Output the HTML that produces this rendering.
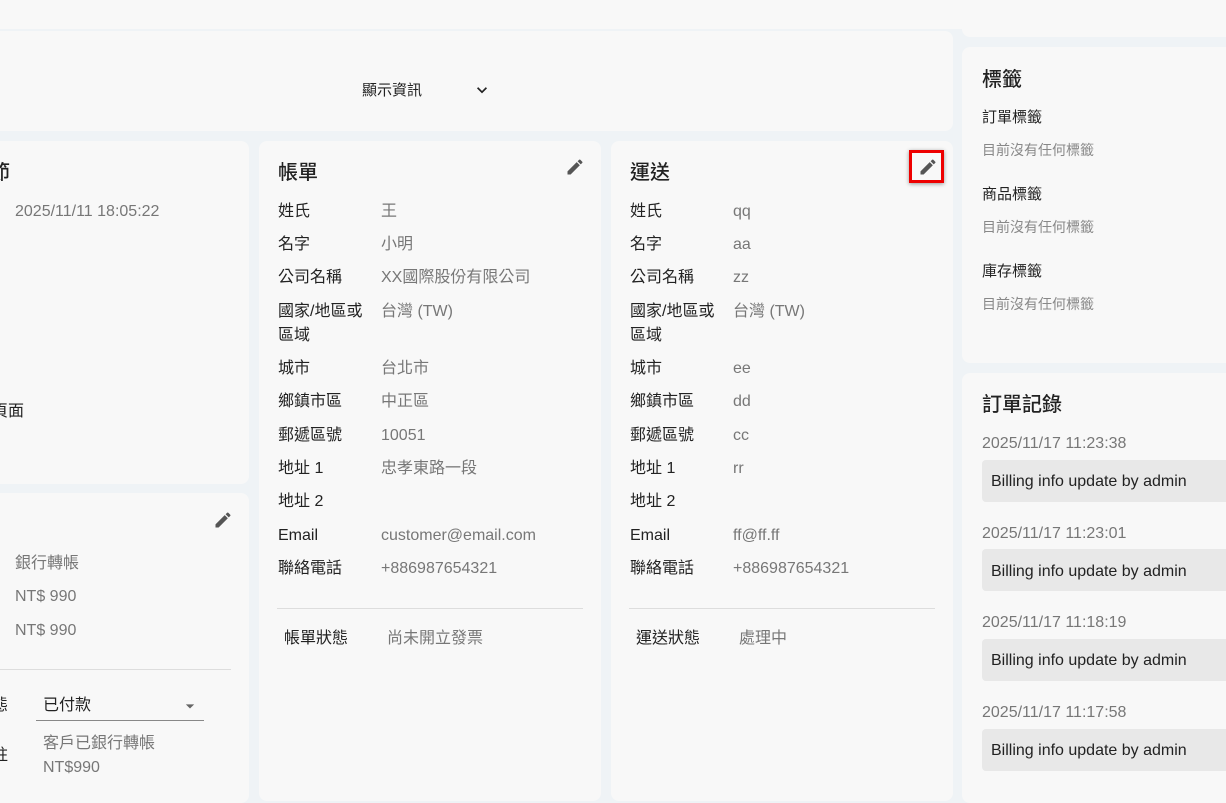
<!DOCTYPE html>
<html><head><meta charset="utf-8"><style>
*{box-sizing:border-box;margin:0;padding:0}
body{width:1226px;height:788px;overflow:hidden;background:#eff3f6;font-family:"Liberation Sans","Noto Sans CJK TC",sans-serif;color:#222;position:relative;font-size:16px}
.c{position:absolute;background:#f8f8f8;border-radius:8px}
.t{position:absolute;white-space:nowrap;line-height:22px;height:22px;transform:translateY(2px)}
.g{color:#777}
.h{font-size:20px;font-weight:500;color:#222;line-height:26px;height:26px}
.s{font-size:14px;color:#888}
.pen{position:absolute;width:20px;height:20px}
.line{position:absolute;height:1px;background:#ddd}
.bb{position:absolute;background:#e8e8e8;border-radius:4px;height:42px;left:982px;width:260px}
.two{height:48px;line-height:24px}
</style></head><body>
<div class="c" style="left:-10px;top:-10px;width:1250px;height:39px;border-radius:0 0 8px 8px"></div>
<div class="c" style="left:-10px;top:31px;width:963px;height:100px"></div>
<div class="t" style="left:362px;top:78px;font-size:15px">顯示資訊</div>
<svg class="pen" style="left:472px;top:80px" viewBox="0 0 24 24"><path d="M7.4 8.6L12 13.2l4.6-4.6L18 10l-6 6-6-6z" fill="#222"/></svg>

<div class="c" style="left:-10px;top:141px;width:259px;height:343px"></div>
<div class="t h" style="left:-10px;top:158px">節</div>
<div class="t g" style="left:15px;top:199px">2025/11/11 18:05:22</div>
<div class="t" style="left:-8px;top:399px">頁面</div>

<div class="c" style="left:-10px;top:493px;width:259px;height:310px"></div>
<svg class="pen" style="left:213px;top:510px" viewBox="0 0 24 24"><path d="M3 17.25V21h3.75L17.81 9.94l-3.75-3.75L3 17.25zM20.71 7.04a1 1 0 000-1.41l-2.34-2.34a1 1 0 00-1.41 0l-1.830 1.83 3.75 3.75 1.83-1.83z" fill="#555"/></svg>
<div class="t g" style="left:15px;top:551px">銀行轉帳</div>
<div class="t g" style="left:15px;top:584px">NT$ 990</div>
<div class="t g" style="left:15px;top:618px">NT$ 990</div>
<div class="line" style="left:0;top:669px;width:231px"></div>
<div class="t" style="left:-8px;top:693px">態</div>
<div class="t" style="left:43px;top:693px">已付款</div>
<svg class="pen" style="left:180px;top:696px" viewBox="0 0 24 24"><path d="M7 10l5 5 5-5z" fill="#666"/></svg>
<div style="position:absolute;left:36px;top:720px;width:168px;height:1px;background:#888"></div>
<div class="t" style="left:-8px;top:743px">註</div>
<div class="t g two" style="left:43px;top:730px">客戶已銀行轉帳<br>NT$990</div>

<div class="c" style="left:259px;top:141px;width:342px;height:660px"></div>
<div class="t h" style="left:278px;top:158px">帳單</div>
<svg class="pen" style="left:565px;top:157px" viewBox="0 0 24 24"><path d="M3 17.25V21h3.75L17.81 9.94l-3.75-3.75L3 17.25zM20.71 7.04a1 1 0 000-1.41l-2.34-2.34a1 1 0 00-1.41 0l-1.83 1.83 3.75 3.75 1.83-1.83z" fill="#555"/></svg>
<div class="t" style="left:278px;top:199px">姓氏</div><div class="t g" style="left:381px;top:199px">王</div>
<div class="t" style="left:278px;top:232px">名字</div><div class="t g" style="left:381px;top:232px">小明</div>
<div class="t" style="left:278px;top:265px">公司名稱</div><div class="t g" style="left:381px;top:265px">XX國際股份有限公司</div>
<div class="t two" style="left:278px;top:298px">國家/地區或<br>區域</div><div class="t g" style="left:381px;top:299px">台灣 (TW)</div>
<div class="t" style="left:278px;top:356px">城市</div><div class="t g" style="left:381px;top:356px">台北市</div>
<div class="t" style="left:278px;top:389px">鄉鎮市區</div><div class="t g" style="left:381px;top:389px">中正區</div>
<div class="t" style="left:278px;top:423px">郵遞區號</div><div class="t g" style="left:381px;top:423px">10051</div>
<div class="t" style="left:278px;top:456px">地址 1</div><div class="t g" style="left:381px;top:456px">忠孝東路一段</div>
<div class="t" style="left:278px;top:489px">地址 2</div>
<div class="t" style="left:278px;top:523px">Email</div><div class="t g" style="left:381px;top:523px">customer@email.com</div>
<div class="t" style="left:278px;top:556px">聯絡電話</div><div class="t g" style="left:381px;top:556px">+886987654321</div>
<div class="line" style="left:277px;top:608px;width:306px"></div>
<div class="t" style="left:284px;top:626px">帳單狀態</div><div class="t g" style="left:387px;top:626px">尚未開立發票</div>

<div class="c" style="left:611px;top:141px;width:342px;height:660px"></div>
<div class="t h" style="left:630px;top:158px">運送</div>
<div style="position:absolute;left:909px;top:150px;width:35px;height:33px;border:3px solid #e00;box-shadow:0 1px 4px rgba(0,0,0,.4)"></div>
<svg class="pen" style="left:918px;top:157px" viewBox="0 0 24 24"><path d="M3 17.25V21h3.75L17.81 9.94l-3.75-3.75L3 17.25zM20.71 7.04a1 1 0 000-1.41l-2.34-2.34a1 1 0 00-1.41 0l-1.83 1.83 3.75 3.75 1.83-1.83z" fill="#555"/></svg>
<div class="t" style="left:630px;top:199px">姓氏</div><div class="t g" style="left:733px;top:199px">qq</div>
<div class="t" style="left:630px;top:232px">名字</div><div class="t g" style="left:733px;top:232px">aa</div>
<div class="t" style="left:630px;top:265px">公司名稱</div><div class="t g" style="left:733px;top:265px">zz</div>
<div class="t two" style="left:630px;top:298px">國家/地區或<br>區域</div><div class="t g" style="left:733px;top:299px">台灣 (TW)</div>
<div class="t" style="left:630px;top:356px">城市</div><div class="t g" style="left:733px;top:356px">ee</div>
<div class="t" style="left:630px;top:389px">鄉鎮市區</div><div class="t g" style="left:733px;top:389px">dd</div>
<div class="t" style="left:630px;top:423px">郵遞區號</div><div class="t g" style="left:733px;top:423px">cc</div>
<div class="t" style="left:630px;top:456px">地址 1</div><div class="t g" style="left:733px;top:456px">rr</div>
<div class="t" style="left:630px;top:489px">地址 2</div>
<div class="t" style="left:630px;top:523px">Email</div><div class="t g" style="left:733px;top:523px">ff@ff.ff</div>
<div class="t" style="left:630px;top:556px">聯絡電話</div><div class="t g" style="left:733px;top:556px">+886987654321</div>
<div class="line" style="left:629px;top:608px;width:306px"></div>
<div class="t" style="left:636px;top:626px">運送狀態</div><div class="t g" style="left:739px;top:626px">處理中</div>

<div class="c" style="left:962px;top:-10px;width:280px;height:47px"></div>
<div class="c" style="left:962px;top:47px;width:280px;height:316px"></div>
<div class="t h" style="left:982px;top:65px">標籤</div>
<div class="t" style="left:982px;top:105px;font-size:15px">訂單標籤</div>
<div class="t s" style="left:982px;top:137px">目前沒有任何標籤</div>
<div class="t" style="left:982px;top:182px;font-size:15px">商品標籤</div>
<div class="t s" style="left:982px;top:214px">目前沒有任何標籤</div>
<div class="t" style="left:982px;top:259px;font-size:15px">庫存標籤</div>
<div class="t s" style="left:982px;top:291px">目前沒有任何標籤</div>

<div class="c" style="left:962px;top:373px;width:280px;height:430px"></div>
<div class="t h" style="left:982px;top:390px">訂單記錄</div>
<div class="t g" style="left:982px;top:431px">2025/11/17 11:23:38</div>
<div class="bb" style="top:460px"></div><div class="t" style="left:991px;top:469px">Billing info update by admin</div>
<div class="t g" style="left:982px;top:521px">2025/11/17 11:23:01</div>
<div class="bb" style="top:549px"></div><div class="t" style="left:991px;top:559px">Billing info update by admin</div>
<div class="t g" style="left:982px;top:610px">2025/11/17 11:18:19</div>
<div class="bb" style="top:639px"></div><div class="t" style="left:991px;top:648px">Billing info update by admin</div>
<div class="t g" style="left:982px;top:700px">2025/11/17 11:17:58</div>
<div class="bb" style="top:729px"></div><div class="t" style="left:991px;top:738px">Billing info update by admin</div>
</body></html>
